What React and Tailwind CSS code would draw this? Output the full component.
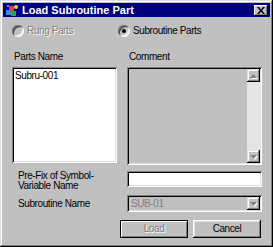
import React from 'react';

const font = { fontFamily: '"Liberation Sans", Arial, sans-serif' };

const Radio = ({ checked, disabled, label }) => (
  <div className={`flex items-center gap-[3px] ${disabled ? 'text-[#808080]' : 'text-black'}`}>
    <span className="relative w-[12px] h-[12px] rounded-full bg-[#c0c0c0] shadow-[inset_1px_1px_#808080,inset_-1px_-1px_#fff,inset_2px_2px_#404040,inset_-2px_-2px_#dfdfdf]">
      {checked && <span className="absolute left-[4px] top-[4px] w-[4px] h-[4px] rounded-full bg-black" />}
    </span>
    <span className={disabled ? '[text-shadow:1px_1px_#fff]' : ''}>{label}</span>
  </div>
);

const Sunken = ({ className, children }) => (
  <div className={`shadow-[inset_1px_1px_#808080,inset_-1px_-1px_#fff,inset_2px_2px_#000,inset_-2px_-2px_#dfdfdf] ${className}`}>
    {children}
  </div>
);

const ArrowBtn = ({ dir, disabled }) => (
  <div className="w-[13px] h-[13px] flex items-center justify-center bg-[#c0c0c0] shadow-[inset_-1px_-1px_#000,inset_1px_1px_#dfdfdf,inset_-2px_-2px_#808080,inset_2px_2px_#fff]">
    <svg width="7" height="4" viewBox="0 0 7 4" className="overflow-visible">
      {dir === 'up' ? (
        <>
          <path d="M4.5 1L8 5H1z" fill="#fff" />
          <path d="M3.5 0L7 4H0z" fill={disabled ? '#808080' : '#000'} />
        </>
      ) : (
        <>
          <path d="M1 1h7L4.5 5z" fill="#fff" />
          <path d="M0 0h7L3.5 4z" fill={disabled ? '#808080' : '#000'} />
        </>
      )}
    </svg>
  </div>
);

export default function App() {
  return (
    <div style={font} className="w-[273px] h-[247px] bg-[#c0c0c0] p-[3px] text-[10px] tracking-[-0.4px] leading-[12px] text-black shadow-[inset_-1px_-1px_#000,inset_1px_1px_#dfdfdf,inset_-2px_-2px_#808080,inset_2px_2px_#fff] flex flex-col">
      {/* title bar */}
      <div className="h-[14px] bg-[#000080] flex items-center pl-[2px] pr-[2px] tracking-normal">
        <svg width="14" height="13" viewBox="0 0 14 13">
          <rect x="1" y="6" width="5" height="5" fill="#3a8ad6" />
          <rect x="6" y="7" width="5" height="5" fill="#2fa84a" />
          <rect x="4" y="2" width="5" height="5" fill="#e04040" />
          <circle cx="11" cy="3" r="2" fill="#f0d030" />
          <rect x="2" y="1" width="2" height="2" fill="#9c6ad0" />
        </svg>
        <span className="ml-[3px] text-white font-bold text-[11px]">Load Subroutine Part</span>
        <div className="ml-auto w-[14px] h-[11px] bg-[#c0c0c0] flex items-center justify-center shadow-[inset_-1px_-1px_#000,inset_1px_1px_#fff,inset_-2px_-2px_#808080]">
          <svg width="8" height="7" viewBox="0 0 8 7">
            <path d="M0 0h2l2 2.5L6 0h2L5 3.5 8 7H6L4 4.5 2 7H0l3-3.5z" fill="#000" />
          </svg>
        </div>
      </div>

      {/* radio row */}
      <div className="flex items-center h-[26px] mt-[1px] pl-[9px]">
        <div className="w-[106px]">
          <Radio disabled label="Rung Parts" />
        </div>
        <Radio checked label="Subroutine Parts" />
      </div>

      {/* lists */}
      <div className="flex mt-[6px] pl-[9px] gap-[10px]">
        <div className="flex flex-col">
          <span className="pl-[2px] h-[14px] leading-[14px]">Parts Name</span>
          <Sunken className="mt-[3px] w-[105px] h-[96px] bg-white p-[3px]">
            <span>Subru-001</span>
          </Sunken>
        </div>
        <div className="flex flex-col">
          <span className="pl-[2px] h-[14px] leading-[14px]">Comment</span>
          <Sunken className="mt-[3px] w-[135px] h-[98px] bg-[#c0c0c0] flex justify-end p-[2px]">
            <div className="w-[13px] h-full flex flex-col justify-between bg-[#e4e4e4]">
              <ArrowBtn dir="up" disabled />
              <ArrowBtn dir="down" disabled />
            </div>
          </Sunken>
        </div>
      </div>

      {/* prefix */}
      <div className="flex items-start mt-[6px] pl-[15px]">
        <div className="w-[109px] leading-[10px]">
          <div>Pre-Fix of Symbol-</div>
          <div>Variable Name</div>
        </div>
        <Sunken className="w-[135px] h-[16px] bg-white" />
      </div>

      {/* subroutine name */}
      <div className="flex items-center mt-[4px] pl-[15px]">
        <div className="w-[109px]">Subroutine Name</div>
        <Sunken className="w-[135px] h-[17px] bg-[#c0c0c0] flex items-center justify-between pl-[4px] pr-[2px]">
          <span className="text-[#808080]">SUB-01</span>
          <ArrowBtn dir="down" disabled />
        </Sunken>
      </div>

      {/* buttons */}
      <div className="flex justify-end gap-[5px] mt-[8px] pr-[9px]">
        <div className="w-[68px] h-[18px] flex items-center justify-center text-[#808080] [text-shadow:1px_1px_#fff] shadow-[inset_1px_1px_#000,inset_-1px_-1px_#000,inset_2px_2px_#fff,inset_-2px_-2px_#808080]">
          Load
        </div>
        <div className="w-[68px] h-[18px] flex items-center justify-center shadow-[inset_-1px_-1px_#000,inset_1px_1px_#fff,inset_-2px_-2px_#808080,inset_2px_2px_#dfdfdf]">
          Cancel
        </div>
      </div>
    </div>
  );
}
